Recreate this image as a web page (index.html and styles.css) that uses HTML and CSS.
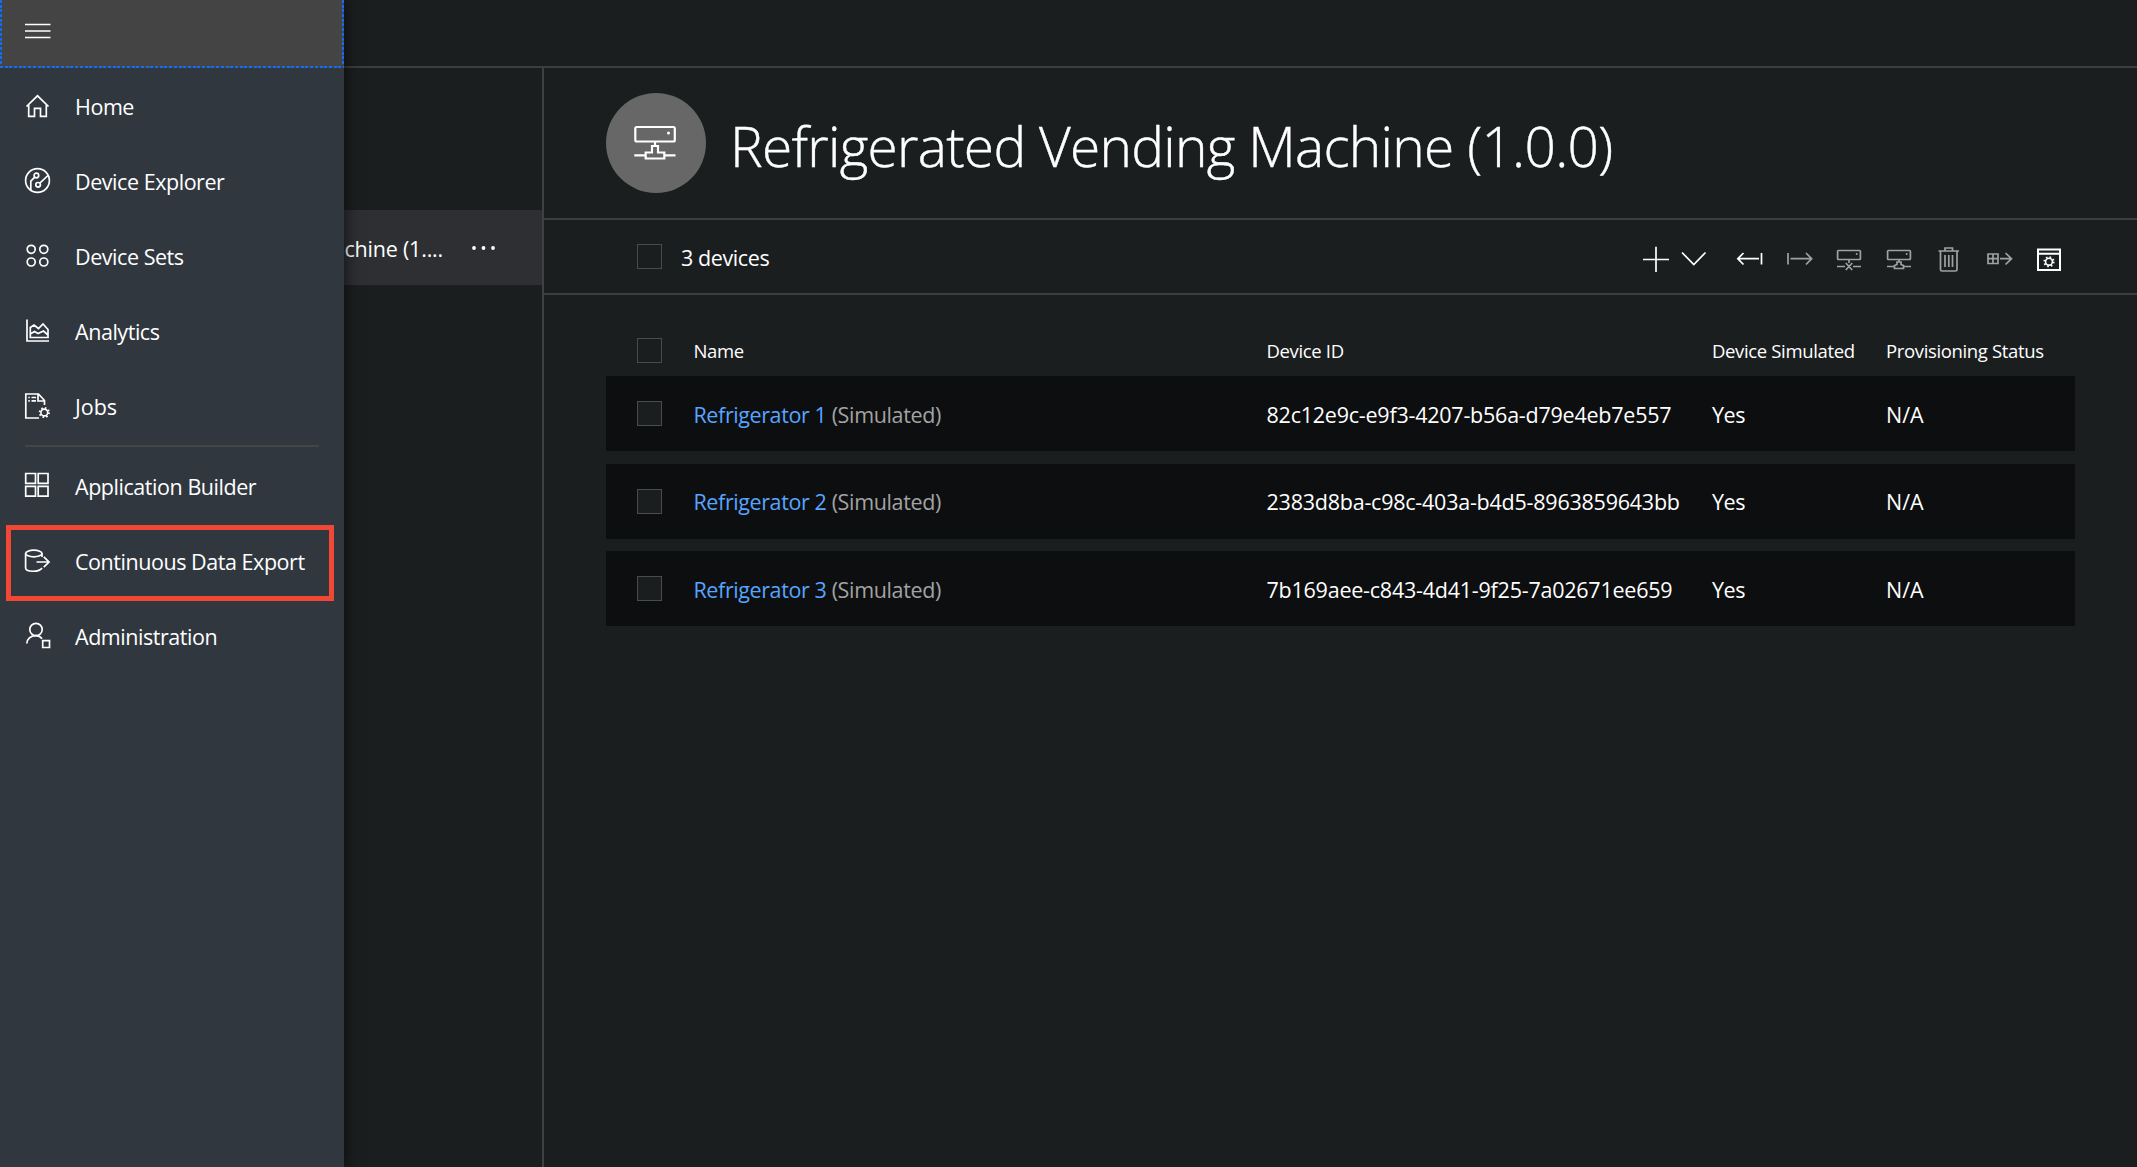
FILE: index.html
```html
<!DOCTYPE html>
<html lang="en">
<head>
<meta charset="utf-8">
<title>Refrigerated Vending Machine (1.0.0)</title>
<link rel="stylesheet" href="styles.css">
</head>
<body>
<div class="app">
  <header class="topbar"></header>
  <div class="workspace">
    <aside class="list-panel">
      <div class="list-item">
        <span class="list-label">Machine (1....</span>
        <svg class="more" viewBox="0 0 24 6"><circle cx="3" cy="3" r="1.9"/><circle cx="12.5" cy="3" r="1.9"/><circle cx="22" cy="3" r="1.9"/></svg>
      </div>
    </aside>
    <main class="main">
      <div class="title-bar">
        <div class="avatar">
          <svg width="46" height="40" viewBox="0 0 46 40" class="icon bold"><rect x="2.300" y="4" width="39.5" height="14.5" rx="1.5"/><circle cx="35.500" cy="10" r="1.5" class="dot"/><path d="M22 18.500V22.500M1.300 32.300H12.500M31.500 32.300H42.500M12.700 35.500V29.500H19V23H25V29.500H31.300V35.500Z"/></svg>
        </div>
        <h1 class="title">Refrigerated Vending Machine (1.0.0)</h1>
      </div>
      <div class="toolbar">
        <span class="check"></span>
        <span class="count">3 devices</span>
        <div class="tools">
          <svg class="icon plus" viewBox="0 0 28 28"><path d="M1 14.500H27M14 1.800V27"/></svg>
          <svg class="icon" viewBox="0 0 28 28"><path d="M2 7.500L13.800 19.500L25.500 7.500"/></svg>
          <svg class="icon" viewBox="0 0 28 28"><path d="M26.500 8V19.500M2.500 13.700H24M8.500 8L2.800 13.700L8.500 19.500"/></svg>
          <svg class="icon dim" viewBox="0 0 28 28"><path d="M3 8V19.500M5.500 13.700H26.500M21 8L26.700 13.700L21 19.500"/></svg>
          <svg class="icon dim" viewBox="0 0 28 28"><rect x="2.600" y="5.500" width="22.800" height="9" rx=".8"/><circle cx="21.700" cy="9" r="1" class="dot"/><path d="M14 14.500V18M2 21.500H10M18 21.500H26M10.800 18L17.200 25M17.200 18L10.800 25"/></svg>
          <svg class="icon dim" viewBox="0 0 28 28"><rect x="2.600" y="5.500" width="22.800" height="9" rx=".8"/><circle cx="21.700" cy="9" r="1" class="dot"/><path d="M14 14.500V17M2 21.500H9M19 21.500H26M9.500 23.500V20.500L12 19.500V17H16V19.500L18.500 20.500V23.500Z"/></svg>
          <svg class="icon dim" viewBox="0 0 28 28"><path d="M3.500 6H24M10 6V3H17.500V6M5.500 6V24.500Q5.500 26 7 26H20.500Q22 26 22 24.500V6M10 10V22M13.800 10V22M17.500 10V22"/></svg>
          <svg class="icon dim" viewBox="0 0 28 28"><path d="M3 9H13V18.500H3ZM8 9V18.500M3 13.700H13M15 13.700H26.500M20.500 8L26.500 13.700L20.500 19.500"/></svg>
          <svg class="icon window" viewBox="0 0 28 28"><path d="M3 4.500H25V25H3ZM3 8.800H25"/><circle class="gear" cx="14" cy="16.700" r="3.400"/><circle class="teeth" cx="14" cy="16.700" r="4.700"/></svg>
        </div>
      </div>
      <section class="devices">
        <div class="row head"><span class="check"></span><span>Name</span><span>Device ID</span><span>Device Simulated</span><span>Provisioning Status</span></div>
        <div class="row"><span class="check"></span><span><a class="link">Refrigerator 1</a> <em class="sim">(Simulated)</em></span><span class="id">82c12e9c-e9f3-4207-b56a-d79e4eb7e557</span><span>Yes</span><span class="status">N/A</span></div>
        <div class="row"><span class="check"></span><span><a class="link">Refrigerator 2</a> <em class="sim">(Simulated)</em></span><span class="id">2383d8ba-c98c-403a-b4d5-8963859643bb</span><span>Yes</span><span class="status">N/A</span></div>
        <div class="row"><span class="check"></span><span><a class="link">Refrigerator 3</a> <em class="sim">(Simulated)</em></span><span class="id">7b169aee-c843-4d41-9f25-7a02671ee659</span><span>Yes</span><span class="status">N/A</span></div>
      </section>
    </main>
  </div>
  <nav class="sidebar">
    <div class="menu-toggle">
      <svg class="icon" viewBox="0 0 28 28"><path d="M1 7.500H26.500M1 14H26.500M1 20.500H26.500"/></svg>
    </div>
    <div class="nav-item"><svg class="icon" viewBox="0 0 28 28"><path d="M2.500 14.500L13.500 3.800L24.500 14.500M4.700 12.500V24.300H10.500V16.300H16.500V24.300H22.300V12.500"/></svg><span>Home</span></div>
    <div class="nav-item"><svg class="icon" viewBox="0 0 28 28"><circle cx="13.500" cy="13.500" r="11.900"/><circle cx="12.400" cy="8.500" r="2.300"/><circle cx="14.100" cy="17.800" r="2.300"/><path d="M15.800 16.100L24 8.500M10.700 10.200L6.800 14.200V23"/></svg><span>Device Explorer</span></div>
    <div class="nav-item"><svg class="icon" viewBox="0 0 28 28"><circle cx="7.200" cy="7.300" r="4"/><circle cx="19.800" cy="7.300" r="4"/><circle cx="7.200" cy="20" r="4"/><circle cx="19.800" cy="20" r="4"/></svg><span>Device Sets</span></div>
    <div class="nav-item"><svg class="icon" viewBox="0 0 28 28"><path d="M3 2.500V24H25M6.300 20.500V10.500L10 8L14.500 11.500L19 7L24 12.500V20.500ZM6.300 17L10.500 14.500L14 16.500L19.500 14L24 18"/></svg><span>Analytics</span></div>
    <div class="nav-item"><svg class="icon" viewBox="0 0 28 28"><path d="M15 26H1.800V2H14.500L20.500 8.500V13M14 2V9H20.500M4.300 5.500H5.800M7.500 5.500H12M4.300 8.800H5.800M7.500 8.800H12"/><circle class="gear" cx="20.300" cy="20.500" r="3.400"/><circle class="teeth" cx="20.300" cy="20.500" r="4.700"/></svg><span class="jobs">Jobs</span></div>
    <div class="divider"></div>
    <div class="nav-item"><svg class="icon" viewBox="0 0 28 28"><path d="M1.700 1.500H11.500V11.300H1.700ZM14.200 1.500H24V11.300H14.200ZM1.700 14.300H11.500V24.100H1.700ZM14.200 14.300H24V24.100H14.200Z"/></svg><span>Application Builder</span></div>
    <div class="nav-item marked"><svg class="icon" viewBox="0 0 28 28"><ellipse cx="9.800" cy="6.500" rx="8.200" ry="3.300"/><path d="M1.600 6.500V21C1.600 25.300 15.500 25.300 18 21M18 6.500V10M12.500 15H24.500M19.800 9.800L25 15L19.800 20.200"/></svg><span>Continuous Data Export</span></div>
    <div class="nav-item"><svg class="icon" viewBox="0 0 28 28"><circle cx="12" cy="7.500" r="6.200"/><path d="M2.800 21.500C3 17 6.500 13.700 12 13.700C14.500 13.700 16.500 14.700 18 16.700M18.700 18.700H25.500V25.500H18.700Z"/></svg><span>Administration</span></div>
  </nav>
</div>
</body>
</html>
```
FILE: styles.css
```css
*, *::after { box-sizing: border-box; }
body {
  margin: 0;
  background: #1b1e1f;
  color: #fff;
  font: 21.5px/30px "Open Sans", "Noto Sans", sans-serif;
  letter-spacing: -0.4px;
  white-space: nowrap;
}
.app { position: relative; display: flex; flex-direction: column; height: 100vh; overflow: hidden; }
.topbar { height: 68px; border-bottom: 2px solid #3c3d3e; flex: none; }
.workspace { display: flex; flex: 1; min-height: 0; }
.list-panel { width: 544px; border-right: 2px solid #3f4041; padding-top: 142px; flex: none; }
.list-item {
  display: flex; align-items: center; justify-content: flex-end; gap: 28px;
  height: 75px; padding-right: 47px; background: #2e2f33;
}
.list-label { padding-top: 2px; letter-spacing: -0.2px; }
.more { width: 24px; height: 6px; fill: #fff; }
.main { flex: 1; display: flex; flex-direction: column; }

.icon { width: 28px; height: 28px; flex: none; fill: none; stroke: currentColor; stroke-width: 1.7; }
.icon .dot { fill: currentColor; stroke: none; }
.gear { stroke-width: 1.6; }
.teeth { stroke-width: 1.8; stroke-dasharray: 1.6 2.091; }
.dim { color: #a0a1a2; }
.bold { width: 46px; height: 40px; stroke-width: 2.2; }

.title-bar { display: flex; align-items: center; gap: 24px; height: 152px; padding-left: 62px; border-bottom: 2px solid #3c3d3e; }
.avatar { width: 100px; height: 100px; border-radius: 50%; background: #676767; display: flex; align-items: center; justify-content: center; }
.title { margin: 6px 0 0; font-size: 55px; font-weight: 300; line-height: 70px; letter-spacing: -0.71px; -webkit-text-stroke: .4px #fff; }

.toolbar { display: flex; align-items: center; height: 75px; padding: 0 74px 0 93px; border-bottom: 2px solid #3c3d3e; }
.check { width: 25px; height: 25px; border: 1.5px solid #4b4b4b; background: #1b1e1f; }
.count { margin: 3px 0 0 19px; }
.tools { display: flex; gap: 22px; margin: 4px 0 0 auto; }
.plus { margin-right: -12px; }
.plus + .icon { margin-right: 5px; }
.window { stroke-width: 2; }

.devices { display: flex; flex-direction: column; gap: 12.5px; padding: 25px 62.5px 0 62px; }
.row { display: grid; grid-template-columns: 56.5px 573px 445.5px 174px 1fr; padding-left: 31px; height: 75px; align-items: center; background: #0d0e10; }
.row > span:not(.check) { padding-top: 2px; }
.head { height: 56px; margin-bottom: -12.5px; background: none; font-size: 18.5px; letter-spacing: -0.35px; padding-top: 5px; }
.head > span:not(.check) { padding-top: 1px; }
.link { color: #58a5ff; }
.sim { font-style: normal; color: #a3a3a3; letter-spacing: -0.35px; }
.id { letter-spacing: -0.23px; }
.status { letter-spacing: 0; }

.sidebar {
  position: absolute; left: 0; top: 0; width: 344px; height: 100%;
  background: #31373f; box-shadow: 0 0 16px rgba(0, 0, 0, .7);
}
.menu-toggle {
  height: 68px; padding: 17px 24px; margin-bottom: 1px;
  background:
    repeating-linear-gradient(90deg, #146cf5 0 3px, #444 3px 4.7px) left bottom / 100% 2px no-repeat,
    repeating-linear-gradient(#146cf5 0 3px, #444 3px 4.7px) left top / 2px 100% no-repeat,
    repeating-linear-gradient(#146cf5 0 3px, #444 3px 4.7px) right top / 2px 100% no-repeat,
    #444;
}
.nav-item { position: relative; display: flex; align-items: center; gap: 23px; height: 75px; padding-left: 24px; letter-spacing: -0.45px; }
.nav-item .icon { margin-top: -2px; }
.jobs { letter-spacing: 0; }
.divider { height: 2px; margin: 1px 25px 2px; background: #444546; }
.marked::after { content: ""; position: absolute; left: 6px; top: 1px; width: 328px; height: 76px; border: 5px solid #f04835; }
```
